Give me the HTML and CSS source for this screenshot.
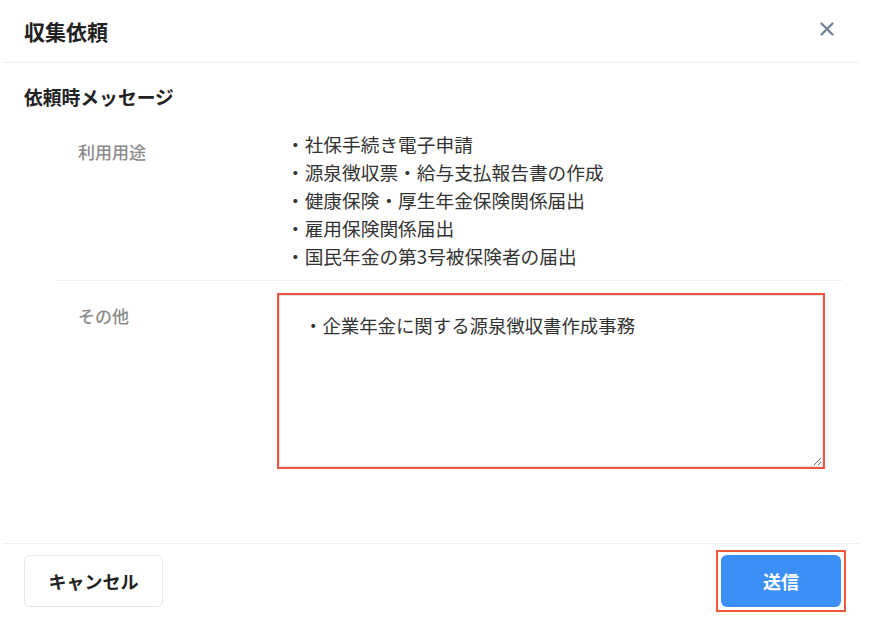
FILE: index.html
```html
<!DOCTYPE html>
<html lang="ja">
<head>
<meta charset="utf-8">
<title>収集依頼</title>
<link rel="stylesheet" href="styles.css">
</head>
<body>
<div class="modal">
  <header class="modal-header">
    <h1 class="modal-title">収集依頼</h1>
    <button class="close-btn" aria-label="閉じる">
      <svg width="14" height="14" viewBox="0 0 14 14"><path d="M1.5 1.5 L12.5 12.5 M12.5 1.5 L1.5 12.5" stroke="#6d7f96" stroke-width="2.2" stroke-linecap="round"/></svg>
    </button>
  </header>
  <main class="modal-body">
    <h2 class="section-title">依頼時メッセージ</h2>
    <div class="row row-first">
      <div class="label">利用用途</div>
      <ul class="value-list">
        <li>・社保手続き電子申請</li>
        <li>・源泉徴収票・給与支払報告書の作成</li>
        <li>・健康保険・厚生年金保険関係届出</li>
        <li>・雇用保険関係届出</li>
        <li>・国民年金の第3号被保険者の届出</li>
      </ul>
    </div>
    <div class="row row-second">
      <div class="label">その他</div>
      <div class="highlight">
        <textarea class="message">・企業年金に関する源泉徴収書作成事務</textarea>
      </div>
    </div>
  </main>
  <footer class="modal-footer">
    <button class="btn btn-cancel">キャンセル</button>
    <div class="highlight highlight-btn">
      <button class="btn btn-primary">送信</button>
    </div>
  </footer>
</div>
</body>
</html>
```

FILE: styles.css
```css
* { box-sizing: border-box; }

body {
  margin: 0;
  background: #ffffff;
  font-family: "Noto Sans CJK JP", "Noto Sans", sans-serif;
  color: #333333;
}

.modal {
  width: 857px;
  margin-left: 3px;
  height: 627px;
}

.modal-header {
  height: 63px;
  display: flex;
  align-items: center;
  justify-content: space-between;
  padding: 0 26px 0 21px;
  border-bottom: 1px solid #eceff3;
}

.modal-title {
  margin: 0;
  font-size: 21px;
  font-weight: 700;
  color: #222222;
  line-height: 28px;
}

.close-btn {
  border: none;
  background: none;
  padding: 0;
  width: 14px;
  height: 14px;
  display: flex;
  margin-top: -4px;
}

.modal-body {
  padding: 21px 18px 74px 21px;
}

.section-title {
  margin: 0 0 20px 0;
  font-size: 18.8px;
  font-weight: 700;
  color: #222222;
  line-height: 26px;
}

.row {
  margin-left: 32px;
  display: grid;
  grid-template-columns: 221px 1fr;
}

.row-first {
  padding-bottom: 10px;
  border-bottom: 1px solid #eceff3;
}

.row-second {
  padding-top: 12px;
}

.label {
  padding-left: 22px;
  margin-top: 10px;
  font-size: 17px;
  line-height: 24px;
  font-weight: 500;
  color: #8a8a8a;
}

.row-second .label {
  margin-top: 11px;
}

.value-list {
  list-style: none;
  margin: 0;
  padding: 0 0 0 9px;
  font-size: 18.7px;
  line-height: 28px;
  color: #333333;
}

.highlight {
  border: 2px solid #f2573d;
  width: 548px;
  height: 176px;
}

.message {
  display: block;
  width: 100%;
  height: 100%;
  margin: 0;
  border: 1px solid #e1e4e9;
  padding: 15px 10px 10px 24px;
  font-family: "Noto Sans CJK JP", "Noto Sans", sans-serif;
  font-size: 18.4px;
  line-height: 28px;
  color: #333333;
  outline: none;
}

.modal-footer {
  border-top: 1px solid #eceff3;
  display: flex;
  align-items: center;
  justify-content: space-between;
  padding: 6px 14px 0 21px;
}

.btn {
  height: 52px;
  border-radius: 6px;
  font-family: "Noto Sans CJK JP", "Noto Sans", sans-serif;
  font-size: 18px;
  font-weight: 700;
}

.btn-cancel {
  width: 139px;
  background: #ffffff;
  border: 1px solid #e2e5ea;
  color: #222222;
}

.highlight-btn {
  width: auto;
  height: auto;
  padding: 3px;
}

.btn-primary {
  display: block;
  width: 120px;
  background: #3b8ff6;
  border: none;
  color: #ffffff;
}
```
